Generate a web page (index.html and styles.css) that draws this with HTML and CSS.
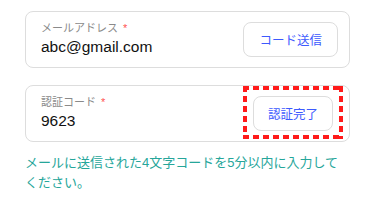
FILE: index.html
```html
<!DOCTYPE html>
<html lang="ja">
<head>
    <meta charset="UTF-8">
    <meta name="viewport" content="width=device-width, initial-scale=1.0">
    <title>認証コード</title>
    <link rel="stylesheet" href="styles.css">
</head>
<body>
    <div class="form">
        <div class="field">
            <div class="field-body">
                <label class="field-label">メールアドレス<span class="req">*</span></label>
                <div class="field-value">abc@gmail.com</div>
            </div>
            <button class="field-btn">コード送信</button>
        </div>

        <div class="field">
            <div class="field-body">
                <label class="field-label">認証コード<span class="req">*</span></label>
                <div class="field-value">9623</div>
            </div>
            <button class="field-btn marked">認証完了</button>
        </div>

        <p class="hint">メールに送信された4文字コードを5分以内に入力してください。</p>
    </div>
</body>
</html>
```

FILE: styles.css
```css
body { margin: 0; background: #fff; font-family: "Liberation Sans", "Noto Sans CJK JP", sans-serif; }
.form { width: 325px; margin: 11px 0 0 25px; }
.field { display: flex; align-items: center; border: 1px solid #ddd; border-radius: 8px; padding: 8px 11px 9px 15px; margin-bottom: 17px; }
.field-body { flex: 1; }
.field-label { display: block; font-size: 11px; line-height: 16px; color: #8a8a8a; }
.req { margin-left: 5px; color: #ff5252; }
.field-value { font-size: 15.5px; line-height: 22px; color: #111; }
.field-btn { height: 35px; padding: 0 15px; white-space: nowrap; background: #fff; border: 1px solid #ddd; border-radius: 8px; color: #3d5afe; font-family: inherit; font-size: 12.5px; }
.marked { position: relative; padding: 0 14px; margin-right: 5px; }
/* annotation frame drawn over the field border */
.marked::after {
    content: ""; position: absolute; inset: -11px -11px -9px -11px; pointer-events: none;
    background:
        repeating-linear-gradient(90deg, #ff1a1a 0 6px, transparent 6px 10px) top left / 100% 4px no-repeat,
        repeating-linear-gradient(90deg, #ff1a1a 0 6px, transparent 6px 10px) bottom left / 100% 4px no-repeat,
        repeating-linear-gradient(180deg, #ff1a1a 0 6px, transparent 6px 10px) top left / 4px 100% no-repeat,
        repeating-linear-gradient(180deg, #ff1a1a 0 6px, transparent 6px 10px) top right / 4px 100% no-repeat;
}
.hint { margin: -6px 0 0; font-size: 13px; line-height: 20px; color: #26a69a; }
```
